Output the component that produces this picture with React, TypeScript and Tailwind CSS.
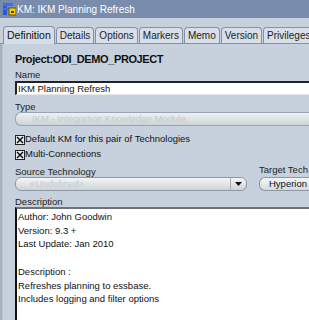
import React from "react";

const font = { fontFamily: '"Liberation Sans", Arial, sans-serif' };

function TitleIcon() {
  return (
    <svg width="14" height="14" viewBox="0 0 14 14" className="shrink-0">
      <rect x="1" y="1" width="4" height="12" fill="#2a5bd6" />
      <rect x="1" y="1" width="10" height="3" fill="#3d6fe6" />
      <rect x="1" y="6" width="7" height="2" fill="#3d6fe6" />
      <rect x="7" y="6" width="7" height="7" fill="#f2d200" stroke="#6b5a00" strokeWidth="1" />
      <rect x="9" y="9" width="3" height="2" fill="#7a2a10" />
    </svg>
  );
}

function Tab({ label, active }: { label: string; active?: boolean }) {
  return active ? (
    <div className="h-[18px] px-[3px] flex items-center border border-b-0 border-[#8592a6] rounded-t-[4px] bg-[#d5dde7] text-[10.5px] text-[#111] -mb-px relative z-10">
      {label}
    </div>
  ) : (
    <div className="h-[16px] px-[3px] flex items-center border border-b-0 border-[#8592a6] rounded-t-[4px] bg-[#d8dfe8] text-[10px] text-[#222]">
      {label}
    </div>
  );
}

function Check({ label }: { label: string }) {
  return (
    <div className="flex items-center h-[11px] text-[9.5px] text-[#111]">
      <div className="w-[10px] h-[10px] border border-[#222] bg-[#e9edf2] flex items-center justify-center">
        <svg width="8" height="8" viewBox="0 0 8 8">
          <path d="M1 1 L7 7 M7 1 L1 7" stroke="#111" strokeWidth="1.5" />
        </svg>
      </div>
      <span>{label}</span>
    </div>
  );
}

export default function App() {
  return (
    <div style={font} className="w-[309px] h-[320px] overflow-hidden bg-[#c6d1dd] flex flex-col">
      <div className="h-[18px] bg-[#7a8cab] flex items-center pl-[2px] gap-[1px] text-white text-[10px] shrink-0">
        <TitleIcon />
        <span>KM: IKM Planning Refresh</span>
      </div>
      <div className="h-[26px] flex items-end pl-[3px] gap-[1px] border-b border-[#8592a6] shrink-0 whitespace-nowrap">
        <Tab label="Definition" active />
        <Tab label="Details" />
        <Tab label="Options" />
        <Tab label="Markers" />
        <Tab label="Memo" />
        <Tab label="Version" />
        <Tab label="Privileges" />
        <div className="h-[16px] w-[6px] border border-b-0 border-r-0 border-[#8592a6] rounded-tl-[4px] bg-[#d8dfe8]" />
      </div>
      <div className="flex-1 flex min-h-0">
        <div className="w-[3px] bg-[#a7b1be] border-r border-[#b9c3cf]" />
        <div className="flex-1 pl-[12px] flex flex-col min-w-0 whitespace-nowrap">
          <div className="mt-[9px] h-[12px] text-[11px] tracking-[-0.4px] font-bold text-[#111] leading-[12px]">
            Project:ODI_DEMO_PROJECT
          </div>
          <div className="mt-[4px] h-[11px] text-[9.5px] text-[#222] leading-[11px]">Name</div>
          <div className="mt-[1px] h-[14px] bg-white border-t-2 border-l-2 border-[#222] border-b border-b-[#e8e8e8] text-[9.5px] leading-[11px] pl-px text-[#111] -mr-[4px]">
            IKM Planning Refresh
          </div>
          <div className="mt-[6px] h-[11px] text-[9.5px] text-[#222] leading-[11px]">Type</div>
          <div className="h-[14px] rounded-l-[6px] border border-[#9aa4b0] border-r-0 bg-gradient-to-b from-[#eef1f3] to-[#cdd4d6] text-[9.5px] leading-[12px] pl-[16px] text-[#c3cbd2] -mr-[4px]">
            IKM - Integration Knowledge Module
          </div>
          <div className="mt-[8px]">
            <Check label="Default KM for this pair of Technologies" />
          </div>
          <div className="mt-[4px]">
            <Check label="Multi-Connections" />
          </div>
          <div className="flex mt-[4px]">
            <div className="flex flex-col w-[232px]">
              <div className="mt-[2px] h-[11px] text-[9.5px] text-[#222] leading-[11px]">Source Technology</div>
              <div className="h-[14px] flex rounded-[6px] border border-[#8e98a4] bg-gradient-to-b from-[#f4f6f7] to-[#cdd4d6] overflow-hidden">
                <div className="flex-1 text-[9.5px] leading-[12px] pl-[14px] text-[#c3cbd2]">&lt;Undefined&gt;</div>
                <div className="w-[16px] border-l border-[#a6aeb8] flex items-center justify-center">
                  <svg width="7" height="4" viewBox="0 0 7 4">
                    <path d="M0 0 H7 L3.5 4 Z" fill="#111" />
                  </svg>
                </div>
              </div>
            </div>
            <div className="flex flex-col ml-[12px] flex-1">
              <div className="h-[11px] text-[9.5px] text-[#222] leading-[11px]">Target Tech</div>
              <div className="mt-[2px] h-[14px] rounded-l-[6px] border border-r-0 border-[#8e98a4] bg-gradient-to-b from-[#f4f6f7] to-[#d6dcde] text-[9.5px] leading-[12px] pl-[9px] text-[#111]">
                Hyperion
              </div>
            </div>
          </div>
          <div className="mt-[5px] h-[11px] text-[9.5px] text-[#222] leading-[11px]">Description</div>
          <div className="flex-1 bg-white border-l-2 border-t-2 border-l-[#111] border-t-[#6c7278] -mr-[4px] pl-[1px] pt-[1px] text-[9.5px] leading-[13.7px] text-[#111]">
            <div>Author: John Goodwin</div>
            <div>Version: 9.3 +</div>
            <div>Last Update: Jan 2010</div>
            <div>&nbsp;</div>
            <div>Description :</div>
            <div>Refreshes planning to essbase.</div>
            <div>Includes logging and filter options</div>
          </div>
        </div>
      </div>
    </div>
  );
}
